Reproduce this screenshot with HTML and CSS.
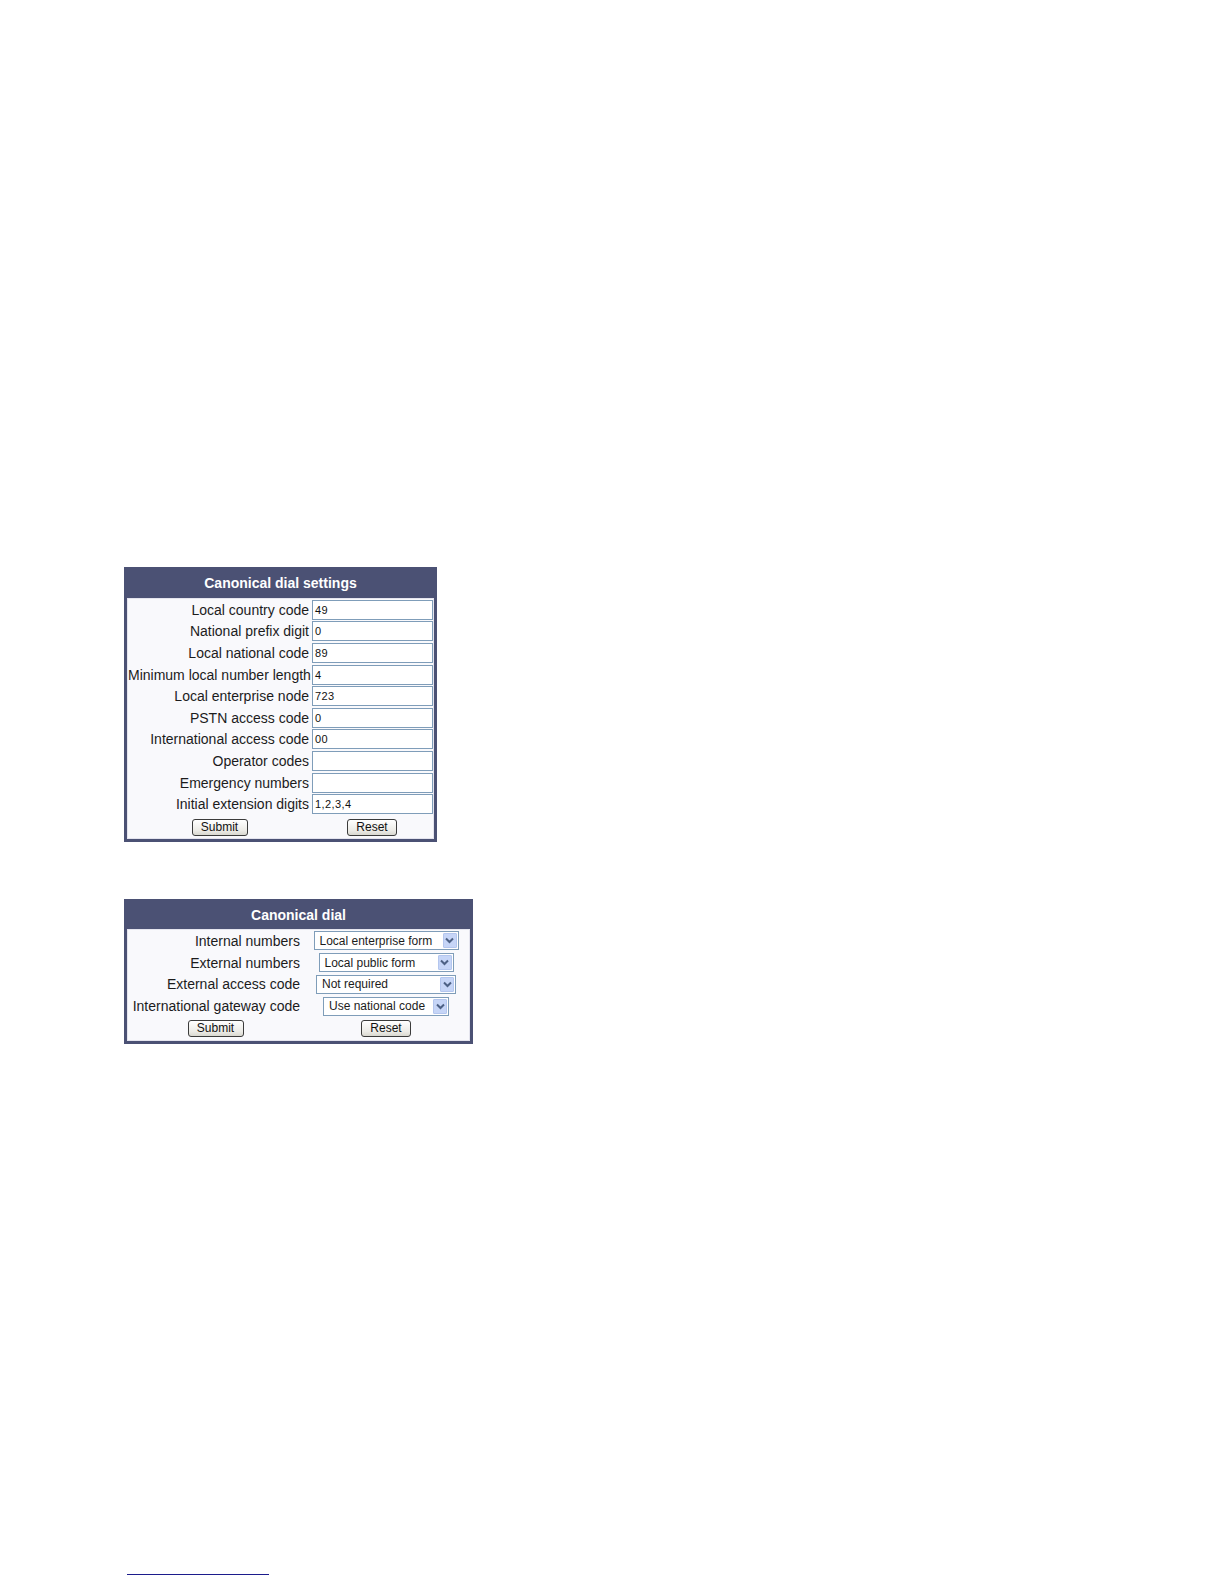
FILE: index.html
```html
<!DOCTYPE html>
<html>
<head>
<meta charset="utf-8">
<title>Canonical dial</title>
<link rel="stylesheet" href="styles.css">
</head>
<body>
<div class="page">
  <div class="panel panel-settings">
    <div class="panel-title">Canonical dial settings</div>
    <div class="panel-body grid-settings">
      <div class="lbl">Local country code</div><div class="fld"><div class="inp">49</div></div>
      <div class="lbl">National prefix digit</div><div class="fld"><div class="inp">0</div></div>
      <div class="lbl">Local national code</div><div class="fld"><div class="inp">89</div></div>
      <div class="lbl">Minimum local number length</div><div class="fld"><div class="inp">4</div></div>
      <div class="lbl">Local enterprise node</div><div class="fld"><div class="inp">723</div></div>
      <div class="lbl">PSTN access code</div><div class="fld"><div class="inp">0</div></div>
      <div class="lbl">International access code</div><div class="fld"><div class="inp">00</div></div>
      <div class="lbl">Operator codes</div><div class="fld"><div class="inp"></div></div>
      <div class="lbl">Emergency numbers</div><div class="fld"><div class="inp"></div></div>
      <div class="lbl">Initial extension digits</div><div class="fld"><div class="inp">1,2,3,4</div></div>
      <div class="btncell btncell-low"><span class="btn btn-submit">Submit</span></div>
      <div class="btncell btncell-low"><span class="btn btn-reset">Reset</span></div>
    </div>
  </div>

  <div class="panel panel-dial">
    <div class="panel-title">Canonical dial</div>
    <div class="panel-body grid-dial">
      <div class="lbl lbl2">Internal numbers</div>
      <div class="selcell"><div class="sel sel-a"><span class="seltext">Local enterprise form</span><span class="arrow"><svg width="9" height="7" viewBox="0 0 9 7"><path d="M1 1.5 L4.5 5 L8 1.5" fill="none" stroke="#4d6185" stroke-width="2"/></svg></span></div></div>
      <div class="lbl lbl2">External numbers</div>
      <div class="selcell"><div class="sel sel-b"><span class="seltext">Local public form</span><span class="arrow"><svg width="9" height="7" viewBox="0 0 9 7"><path d="M1 1.5 L4.5 5 L8 1.5" fill="none" stroke="#4d6185" stroke-width="2"/></svg></span></div></div>
      <div class="lbl lbl2">External access code</div>
      <div class="selcell"><div class="sel sel-c"><span class="seltext">Not required</span><span class="arrow"><svg width="9" height="7" viewBox="0 0 9 7"><path d="M1 1.5 L4.5 5 L8 1.5" fill="none" stroke="#4d6185" stroke-width="2"/></svg></span></div></div>
      <div class="lbl lbl2">International gateway code</div>
      <div class="selcell"><div class="sel sel-d"><span class="seltext">Use national code</span><span class="arrow"><svg width="9" height="7" viewBox="0 0 9 7"><path d="M1 1.5 L4.5 5 L8 1.5" fill="none" stroke="#4d6185" stroke-width="2"/></svg></span></div></div>
      <div class="btncell"><span class="btn btn-submit">Submit</span></div>
      <div class="btncell"><span class="btn btn-reset">Reset</span></div>
    </div>
  </div>

  <div class="footline"></div>
</div>
</body>
</html>
```

FILE: styles.css
```css
html, body {
  margin: 0;
  padding: 0;
  background: #ffffff;
}

body {
  font-family: "Liberation Sans", Arial, sans-serif;
  color: #1c1c1c;
}

.page {
  padding: 567px 0 0 124px;
  height: 1584px;
  box-sizing: border-box;
  display: flex;
  flex-direction: column;
  align-items: flex-start;
}

.panel {
  border: 3px solid #4b5174;
  border-top: 0;
  background: #4b5174;
  box-sizing: border-box;
}

.panel-settings {
  width: 313px;
}

.panel-dial {
  width: 349px;
  margin-top: 57px;
}

.panel-title {
  height: 31px;
  line-height: 33px;
  text-align: center;
  color: #ffffff;
  font-weight: bold;
  font-size: 14px;
}

.panel-dial .panel-title {
  height: 30px;
  line-height: 33px;
}

.panel-body {
  background: #f9f9fc;
  border: 1px solid #e4e4ee;
  display: grid;
  align-items: center;
}

.grid-settings {
  grid-template-columns: 183px 122px;
  grid-template-rows: repeat(10, 21.6px) 23px;
}

.grid-dial {
  grid-template-columns: 175px 166px;
  grid-template-rows: repeat(4, 21.8px) 23px;
}

.lbl {
  text-align: right;
  font-size: 14px;
  white-space: nowrap;
  padding-right: 2px;
}

.lbl2 {
  padding-right: 3px;
}

.fld {
  display: flex;
  align-items: center;
  padding-left: 1px;
}

.inp {
  width: 121px;
  height: 20px;
  box-sizing: border-box;
  border: 1px solid #7f9db9;
  background: #ffffff;
  font-size: 11px;
  line-height: 18px;
  padding-left: 2px;
  letter-spacing: 0.4px;
  color: #111;
}

.selcell {
  display: flex;
  justify-content: center;
  align-items: center;
}

.sel {
  height: 19px;
  box-sizing: border-box;
  border: 1px solid #7f9db9;
  background: #ffffff;
  display: flex;
  align-items: center;
  justify-content: space-between;
  font-size: 12px;
  padding-left: 5px;
  padding-right: 1px;
}

.sel-a { width: 145px; }
.sel-b { width: 135px; }
.sel-c { width: 140px; }
.sel-d { width: 126px; }

.seltext {
  white-space: nowrap;
}

.arrow {
  width: 14px;
  height: 15px;
  box-sizing: border-box;
  background: #c6d5f7;
  border: 1px solid #b4c6ee;
  display: flex;
  align-items: center;
  justify-content: center;
  border-radius: 1px;
}

.btncell {
  display: flex;
  justify-content: center;
  align-items: center;
  height: 100%;
  box-sizing: border-box;
}

.btncell-low {
  padding-top: 3px;
}

.btn {
  display: inline-block;
  height: 17px;
  box-sizing: border-box;
  border: 1px solid #3b3b3b;
  border-radius: 3px;
  background: linear-gradient(#ffffff, #ecebe6 70%, #d9d8d0);
  font-size: 12px;
  line-height: 15px;
  text-align: center;
  color: #111;
}

.btn-submit { width: 56px; }
.btn-reset { width: 50px; }

.footline {
  margin-top: auto;
  margin-bottom: 9px;
  margin-left: 3px;
  width: 142px;
  height: 1px;
  background: #1c1c8c;
}
```
